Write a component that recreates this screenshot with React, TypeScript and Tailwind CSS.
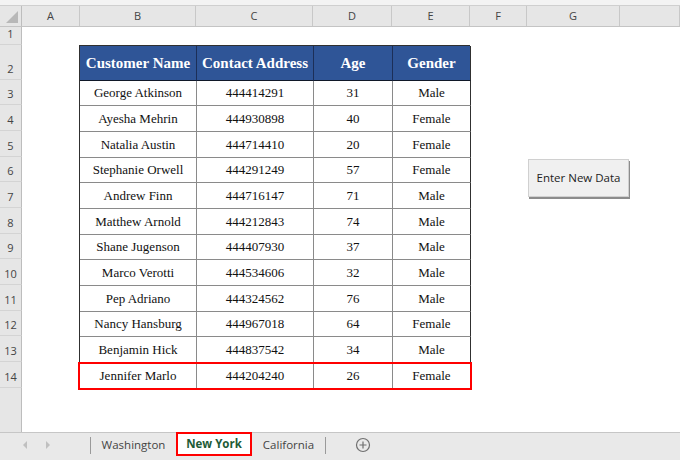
import React from "react";

const columns = [
  { label: "A", w: "w-[58px]" },
  { label: "B", w: "w-[116px]" },
  { label: "C", w: "w-[117px]" },
  { label: "D", w: "w-[79px]" },
  { label: "E", w: "w-[78px]" },
  { label: "F", w: "w-[57px]" },
  { label: "G", w: "w-[93px]" },
  { label: "", w: "flex-1" },
];

const customers = [
  ["George Atkinson", "444414291", "31", "Male"],
  ["Ayesha Mehrin", "444930898", "40", "Female"],
  ["Natalia Austin", "444714410", "20", "Female"],
  ["Stephanie Orwell", "444291249", "57", "Female"],
  ["Andrew Finn", "444716147", "71", "Male"],
  ["Matthew Arnold", "444212843", "74", "Male"],
  ["Shane Jugenson", "444407930", "37", "Male"],
  ["Marco Verotti", "444534606", "32", "Male"],
  ["Pep Adriano", "444324562", "76", "Male"],
  ["Nancy Hansburg", "444967018", "64", "Female"],
  ["Benjamin Hick", "444837542", "34", "Male"],
  ["Jennifer Marlo", "444204240", "26", "Female"],
];

const headers = ["Customer Name", "Contact Address", "Age", "Gender"];

// row heights for rows 1..14, matching the grid template below
const rowNums = [1, 2, 3, 4, 5, 6, 7, 8, 9, 10, 11, 12, 13, 14];

export default function App() {
  return (
    <div
      className="w-[680px] h-[460px] flex flex-col bg-white overflow-hidden"
      style={{ fontFamily: "'Open Sans', 'Noto Sans', sans-serif" }}
    >
      {/* strip above the column headings */}
      <div className="h-[6px] bg-[#f3f3f3] border-b border-[#cfcfcf]" />

      {/* column headings */}
      <div className="h-[21px] flex bg-[#e6e6e6] border-b border-[#c4c4c4] text-[11px] text-[#444]">
        <div className="w-[22px] relative border-r border-[#bdbdbd]">
          <div className="absolute right-[3px] bottom-[3px] w-0 h-0 border-l-[12px] border-l-transparent border-b-[12px] border-b-[#b8b8b8]" />
        </div>
        {columns.map((c, i) => (
          <div
            key={i}
            className={`${c.w} flex items-center justify-center border-r border-[#c8c8c8]`}
          >
            {c.label}
          </div>
        ))}
      </div>

      {/* sheet body */}
      <div className="flex-1 grid grid-cols-[22px_58px_116px_117px_79px_78px_57px_93px_1fr] grid-rows-[18px_35px_25px_26px_26px_25px_26px_26px_25px_26px_26px_25px_26px_26px_1fr]">
        {rowNums.map((n) => (
          <div
            key={n}
            className="col-start-1 flex items-end justify-center pb-[2px] bg-[#e6e6e6] border-r border-[#bdbdbd] border-b border-b-[#d4d4d4] text-[11px] text-[#444]"
            style={{ gridRowStart: n }}
          >
            {n}
          </div>
        ))}
        <div className="col-start-1 row-start-15 bg-[#e6e6e6] border-r border-[#bdbdbd]" />

        {/* data table */}
        <div
          className="col-start-3 col-span-4 row-start-2 row-span-13 -ml-px relative grid grid-cols-[117px_117px_79px_78px] grid-rows-[35px_25px_26px_26px_25px_26px_26px_25px_26px_26px_25px_26px_26px] border-l border-t border-[#303030] text-[13px] text-[#111]"
          style={{ fontFamily: "'Liberation Serif', 'Times New Roman', serif" }}
        >
          {headers.map((h, i) => (
            <div
              key={h}
              className={`bg-[#2f5597] text-white font-bold text-[15px] flex items-center justify-center border-b border-b-[#101828] ${
                i === 3 ? "border-r border-r-[#303030]" : "border-r border-r-[#1c2f58]"
              }`}
            >
              {h}
            </div>
          ))}
          {customers.map((row, r) =>
            row.map((cell, c) => (
              <div
                key={`${r}-${c}`}
                className={`flex items-center justify-center border-b ${
                  r === customers.length - 1 ? "border-b-[#303030]" : "border-b-[#8a8a8a]"
                } border-r ${c === 3 ? "border-r-[#303030]" : "border-r-[#8a8a8a]"}`}
              >
                {cell}
              </div>
            ))
          )}
          {/* highlight of the newest entry */}
          <div className="absolute left-[-2px] right-[-2px] bottom-[-2px] h-[28px] border-2 border-[#ff0000] pointer-events-none" />
        </div>

        {/* macro button */}
        <div className="col-start-8 row-start-6 row-span-2 self-start mt-[2px] ml-px">
          <button className="w-[101px] h-[38px] bg-[#f0f0f0] border border-[#d0d0d0] shadow-[1px_2px_0_#8c8c8c] text-[11.5px] text-[#222] flex items-center justify-center">
            Enter New Data
          </button>
        </div>
      </div>

      {/* sheet tabs */}
      <div className="h-[28px] flex items-start bg-[#e9e9e9] border-t border-[#c6c6c6] text-[11.5px] text-[#444]">
        <div className="w-[90px] h-[24px] flex items-center pl-[23px] gap-[19px]">
          <span className="w-0 h-0 border-y-[4px] border-y-transparent border-r-[4px] border-r-[#c0c0c0]" />
          <span className="w-0 h-0 border-y-[4px] border-y-transparent border-l-[4px] border-l-[#c0c0c0]" />
        </div>
        <div className="w-px h-[17px] mt-[4px] bg-[#9a9a9a]" />
        <div className="w-[85px] h-[24px] flex items-center justify-center">Washington</div>
        <div className="w-[76px] h-[24px] -mt-px flex items-center justify-center bg-white border-2 border-[#ff0000] font-bold text-[#1d5b36]">
          New York
        </div>
        <div className="w-[73px] h-[24px] flex items-center justify-center">California</div>
        <div className="w-px h-[17px] mt-[4px] bg-[#9a9a9a]" />
        <div className="ml-[29px] h-[24px] flex items-center">
          <svg width="16" height="16" viewBox="0 0 16 16" fill="none" stroke="#6f6f6f" strokeWidth="1.2">
            <circle cx="8" cy="8" r="6.5" />
            <path d="M8 4.5v7M4.5 8h7" />
          </svg>
        </div>
      </div>
    </div>
  );
}
